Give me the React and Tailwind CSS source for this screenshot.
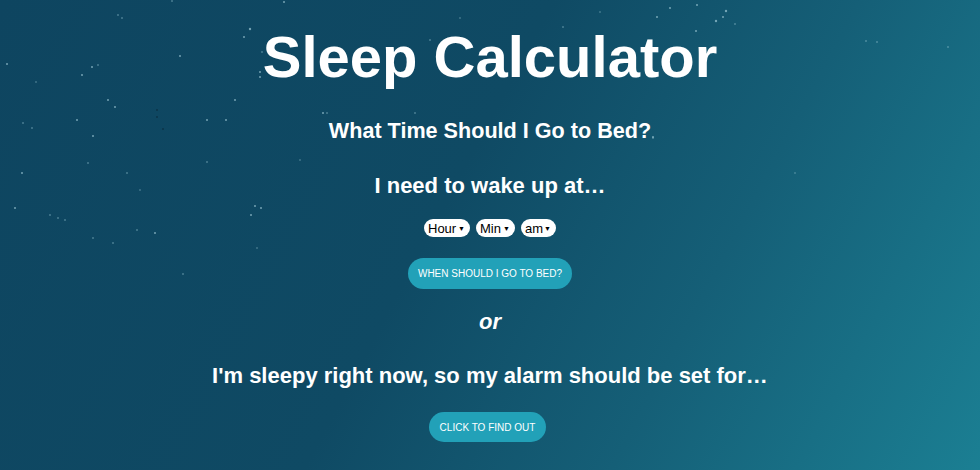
import React from "react";

// Scattered star field drawn over the gradient backdrop
const STARS = [
  [284, 2, 1], [250, 29, 1.2], [244, 37, 1], [260, 72, 1], [260, 77, 1], [180, 56, 1],
  [7, 64, 1], [82, 75, 1], [92, 67, 1], [98, 65, 0.8], [108, 100, 1], [115, 107, 1],
  [77, 120, 1], [93, 136, 1], [23, 123, 0.8], [32, 128, 0.8], [207, 120, 1], [226, 120, 1],
  [235, 100, 1], [88, 163, 0.8], [22, 173, 1], [127, 173, 0.8], [207, 162, 0.8],
  [15, 208, 1], [50, 215, 0.8], [58, 218, 0.8], [65, 220, 0.8], [255, 206, 1],
  [261, 208, 1], [251, 215, 1], [155, 233, 1], [137, 230, 0.8], [93, 238, 0.8],
  [323, 113, 1], [118, 15, 0.8], [122, 18, 0.8], [172, 1, 0.8], [657, 17, 1], [670, 8, 1],
  [697, 5, 1], [726, 11, 1.2], [716, 21, 1.2], [723, 17, 1], [735, 24, 0.8], [696, 31, 1],
  [866, 41, 0.8], [877, 42, 0.8], [948, 47, 0.8], [653, 137, 1], [795, 173, 0.7],
  [563, 27, 0.8], [430, 40, 0.8], [327, 113, 0.8], [415, 113, 0.8], [653, 138, 0.8],
  [113, 243, 0.8], [183, 274, 0.8], [257, 248, 0.7], [262, 52, 0.8], [460, 18, 0.7],
  [600, 12, 0.7], [36, 82, 0.7], [140, 190, 0.7], [300, 160, 0.7],
];

const DARK_STARS = [
  [157, 110], [157, 117], [163, 129],
];

function StarField() {
  return (
    <svg
      className="pointer-events-none absolute inset-0 h-full w-full"
      width="980"
      height="470"
      viewBox="0 0 980 470"
    >
      {STARS.map(([x, y, r], i) => (
        <circle key={i} cx={x} cy={y} r={r} fill="#9ec9d6" opacity="0.7" />
      ))}
      {DARK_STARS.map(([x, y], i) => (
        <circle key={"d" + i} cx={x} cy={y} r="1" fill="#0a2f42" opacity="0.8" />
      ))}
    </svg>
  );
}

function Picker({ label, width }) {
  return (
    <span
      className={`inline-flex h-[18px] items-center justify-between rounded-full bg-white pl-[4px] pr-[5px] text-[13px] leading-none text-black ${width}`}
    >
      <span>{label}</span>
      <span className="text-[7px]">▼</span>
    </span>
  );
}

function PillButton({ children, width }) {
  return (
    <button
      className={`flex h-[30px] items-center justify-center rounded-full bg-[#22a1b8] text-[10px] uppercase text-white ${width}`}
    >
      {children}
    </button>
  );
}

export default function App() {
  return (
    <div
      className="relative h-[470px] w-[980px] overflow-hidden bg-[linear-gradient(118deg,#0e4560_0%,#0f4a64_45%,#155f77_70%,#1b7f93_100%)] text-white"
      style={{ fontFamily: '"Liberation Sans", Arial, sans-serif' }}
    >
      <StarField />
      <main className="relative flex flex-col items-center">
        <h1 className="mt-[24px] text-[58px] font-bold leading-[66px]">Sleep Calculator</h1>
        <h2 className="mt-[28px] text-[21.6px] font-bold leading-[26px]">What Time Should I Go to Bed?</h2>
        <h3 className="mt-[28px] text-[22px] font-bold leading-[28px]">I need to wake up at…</h3>
        <div className="mt-[19px] flex gap-[6px]">
          <Picker label="Hour" width="w-[46px]" />
          <Picker label="Min" width="w-[39px]" />
          <Picker label="am" width="w-[35px]" />
        </div>
        <div className="mt-[21px]">
          <PillButton width="w-[164px] h-[31px]">When should I go to bed?</PillButton>
        </div>
        <p className="mt-[19px] text-[22px] font-bold italic leading-[28px]">or</p>
        <h3 className="mt-[26px] text-[22px] font-bold leading-[28px]">
          I'm sleepy right now, so my alarm should be set for…
        </h3>
        <div className="mr-[5px] mt-[22px]">
          <PillButton width="w-[117px]">Click to find out</PillButton>
        </div>
      </main>
    </div>
  );
}
